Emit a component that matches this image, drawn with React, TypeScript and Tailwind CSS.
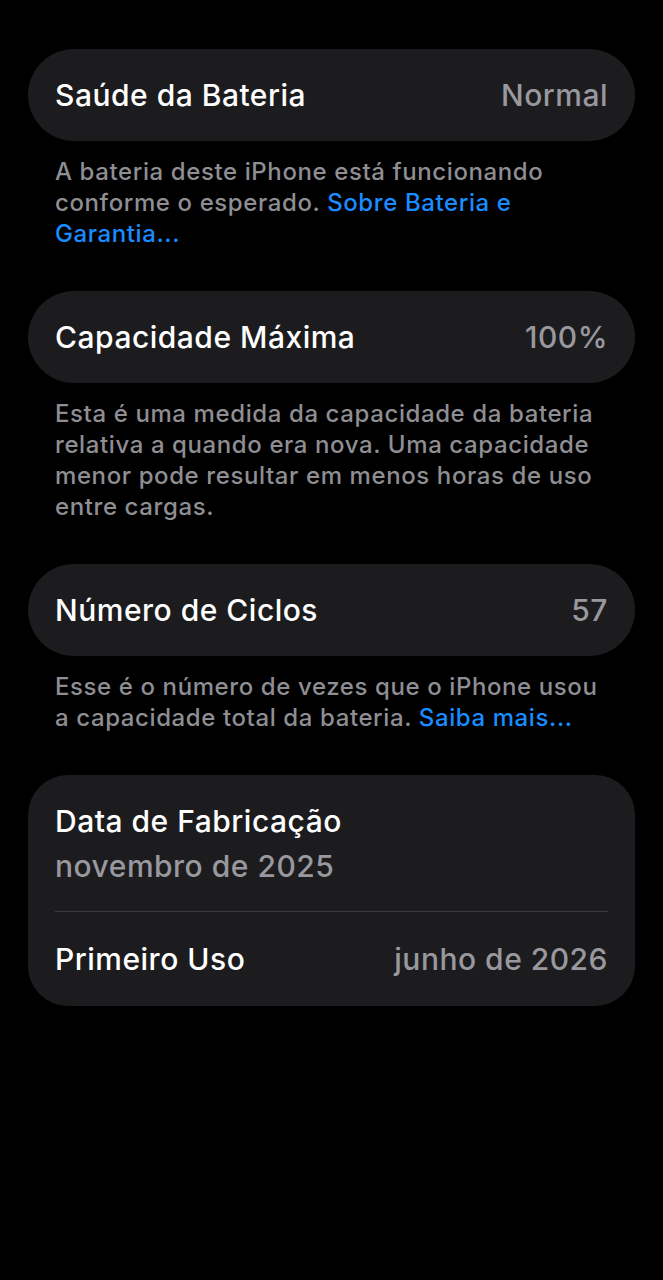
import React from "react";

const font = { fontFamily: '"Inter", "Noto Sans", "Liberation Sans", sans-serif' };

function Row({ label, value }: { label: string; value: string }) {
  return (
    <div className="mx-[28px] flex h-[92px] items-center justify-between rounded-[46px] bg-[#1c1c1e] px-[27px]">
      <span className="text-[30px] font-medium leading-[36px] tracking-[0.5px] text-white">{label}</span>
      <span className="text-[30px] font-medium leading-[36px] tracking-[0.5px] text-[#98989e]">{value}</span>
    </div>
  );
}

function Desc({ children }: { children: React.ReactNode }) {
  return (
    <p className="mx-[55px] mt-[15px] mb-[42px] whitespace-nowrap text-[24px] font-medium leading-[31px] tracking-[0.6px] text-[#8e8e93]">
      {children}
    </p>
  );
}

export default function App() {
  return (
    <div className="min-h-[1280px] w-full bg-black pt-[49px]" style={font}>
      <Row label="Saúde da Bateria" value="Normal" />
      <Desc>
        A bateria deste iPhone está funcionando
        <br />
        conforme o esperado. <span className="text-[#1a8cff]">Sobre Bateria e</span>
        <br />
        <span className="text-[#1a8cff]">Garantia...</span>
      </Desc>
      <Row label="Capacidade Máxima" value="100%" />
      <Desc>
        Esta é uma medida da capacidade da bateria
        <br />
        relativa a quando era nova. Uma capacidade
        <br />
        menor pode resultar em menos horas de uso
        <br />
        entre cargas.
      </Desc>
      <Row label="Número de Ciclos" value="57" />
      <Desc>
        Esse é o número de vezes que o iPhone usou
        <br />
        a capacidade total da bateria. <span className="text-[#1a8cff]">Saiba mais...</span>
      </Desc>
      <div className="mx-[28px] rounded-[40px] bg-[#1c1c1e]">
        <div className="mx-[27px] border-b border-[#3a3a3d] pt-[28px] pb-[27px]">
          <div className="text-[30px] font-medium leading-[36px] tracking-[0.5px] text-white">Data de Fabricação</div>
          <div className="mt-[9px] text-[30px] font-medium leading-[36px] tracking-[0.5px] text-[#98989e]">
            novembro de 2025
          </div>
        </div>
        <div className="flex h-[94px] items-center justify-between px-[27px]">
          <span className="text-[30px] font-medium leading-[36px] tracking-[0.5px] text-white">Primeiro Uso</span>
          <span className="text-[30px] font-medium leading-[36px] tracking-[0.5px] text-[#98989e]">junho de 2026</span>
        </div>
      </div>
    </div>
  );
}
